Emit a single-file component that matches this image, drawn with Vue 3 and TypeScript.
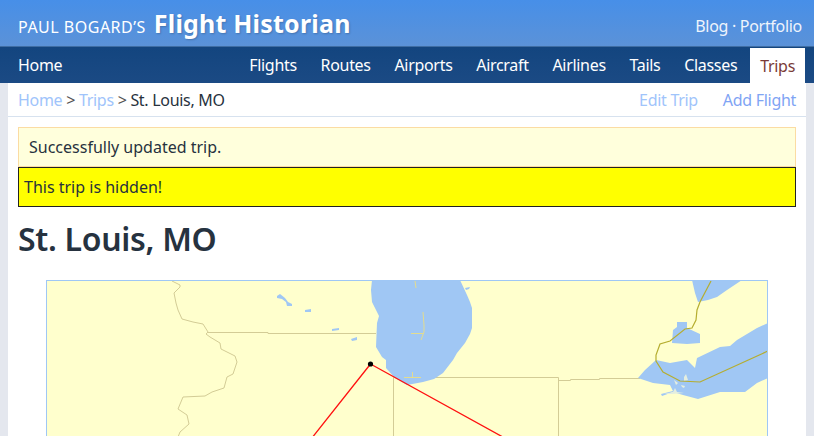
<script setup lang="ts">
const navItems: string[] = ['Flights', 'Routes', 'Airports', 'Aircraft', 'Airlines', 'Tails', 'Classes']
</script>

<template>
  <div class="page">
    <header class="banner">
      <div class="brand"><span class="owner">PAUL BOGARD’S</span><span class="title">Flight Historian</span></div>
      <div class="ext">Blog · Portfolio</div>
    </header>
    <nav class="nav">
      <a class="home">Home</a>
      <div class="links">
        <a v-for="n in navItems" :key="n" class="item">{{ n }}</a>
        <a class="item active">Trips</a>
      </div>
    </nav>
    <main class="main">
      <div class="crumbs">
        <div><a class="pale">Home</a> <span class="sep">&gt;</span> <a class="pale">Trips</a> <span class="sep">&gt;</span> St. Louis, MO</div>
        <div class="actions"><a class="pale">Edit Trip</a><a class="strong">Add Flight</a></div>
      </div>
      <div class="content">
        <div class="flash">Successfully updated trip.</div>
        <div class="hidden">This trip is hidden!</div>
        <h1>St. Louis, MO</h1>
        <div class="map">
          <svg width="722" height="200" viewBox="46 280 722 200">
            <rect x="46" y="280" width="722" height="200" fill="#ffffcd" />
            <g fill="none" stroke="#d3cc96" stroke-width="1">
              <path d="M172 281L180 285L180 287L174 293L176 303L178 310L182 319L193 322L203 324L208 332L206 334L210 337L220 343L221 349L235 356L237 362L233 374L227 377L224 388L212 392L205 396L183 397L178 409L187 415L189 424L180 432L178 437" />
              <path d="M208 332.5H268V333.5H376" />
              <path d="M393.5 437V377.5H558.5V437M558.5 380.5H570.5V379.5H599.5V378.5H640" />
            </g>
            <g fill="#a0c7f4">
              <path d="M372 280L371 290L372 302L375 308L379 316L377 323L376 347L382 357L386 360L386 368L395 378L407 385L423 382L434 379L443 373L453 360L457 353L465 343L470 334L472 328L472 308L470 302L467 295L460 280Z" />
              <path d="M692 280L695 293L698 302L708 300L717 297L727 290L742 280Z" />
              <path d="M677 322L687 322L687 328L700 334L700 343L687 344L672 343L673 330L677 327Z" />
              <path d="M638 378L645 370L656 360L670 363L687 360L695 368L697 358L720 347L730 346L737 340L757 328L768 323L768 378L757 383L745 392L720 392L698 399L683 395L673 392L662 396L661 394L673 391L670 385L653 383Z" />
              <path d="M305 310L311 309L311 312L305 312ZM332 329L339 328L339 330L332 331ZM351 339L357 337L357 340L352 341ZM277 296L280 294L285 298L288 302L292 304L292 306L287 306L286 302L282 299L277 298ZM465 288L470 287L469 289L466 290Z" />
            </g>
            <path d="M684 377L686 374L688 380L684 381ZM674 380L678 383L676 385ZM681 385L685 386L684 388L682 387ZM664 394L673 392L675 388L677 392L684 393L672 394Z" fill="#e4eee0" />
            <g fill="none" stroke="#e3dc8f" stroke-width="1">
              <path d="M415 281L416 288M423 312L424 325L424 332L421 340M411 333.5H423M404 377.5H421M412.5 372V377" />
            </g>
            <path d="M711 281L700 302L697 310L696 320L692 328L685 329L670 341L660 344L656 355L656 361L663 372L680 381L700 382L768 351" fill="none" stroke="#b5ad2f" stroke-width="1.2" />
            <g fill="none" stroke="#ff1010" stroke-width="1.3">
              <path d="M370.5 364L300 453M370.5 364L530 452" />
            </g>
            <circle cx="370.5" cy="364" r="2.6" fill="#000" />
          </svg>
        </div>
      </div>
    </main>
  </div>
</template>

<style scoped>
.page {
  height: 436px;
  overflow: hidden;
  background: #e4e7ee;
  color: #27323e;
  font-family: "Noto Sans", "Lato", sans-serif;
  font-size: 16px;
  letter-spacing: -0.3px;
}
.banner {
  height: 46px;
  box-sizing: border-box;
  display: flex;
  align-items: center;
  justify-content: space-between;
  padding: 0 12px 0 18px;
  background: linear-gradient(#478fe8, #5b92d8);
  color: #fff;
}
.brand { display: flex; align-items: baseline; gap: 8px; }
.owner { font-size: 16px; letter-spacing: 0.5px; }
.title {
  font-size: 25px;
  font-weight: 700;
  letter-spacing: 0.2px;
  text-shadow: 1px 1px 2px rgba(0, 0, 0, 0.2);
}
.ext { color: #eef4fc; padding-top: 6px; }
.nav {
  height: 37px;
  box-sizing: border-box;
  border-top: 1px solid #3f6da3;
  display: flex;
  align-items: stretch;
  justify-content: space-between;
  padding: 0 9px 0 18px;
  background: linear-gradient(#13457f, #1b4a84);
  color: #fff;
}
.home { align-self: center; }
.links { display: flex; align-items: stretch; }
.item { display: flex; align-items: center; padding: 0 11.85px; }
.active {
  margin: 1px 0 0 1px;
  padding: 0 10px;
  background: #fff;
  color: #7a3b38;
}
.main {
  margin: 0 8px;
  background: #fff;
  height: 353px;
  overflow: hidden;
}
.crumbs {
  height: 34px;
  box-sizing: border-box;
  border-bottom: 1px solid #d7e2ef;
  display: flex;
  align-items: center;
  justify-content: space-between;
  padding: 0 10px;
}
.pale { color: #a0c4fb; }
.strong { color: #7fa4f4; }
.sep { color: #555; }
.actions { display: flex; gap: 25px; }
.content { padding: 10px 10px 0; }
.flash {
  height: 40px;
  box-sizing: border-box;
  border: 1px solid #fbdca3;
  background: #ffffdc;
  padding: 0 10px;
  display: flex;
  align-items: center;
  letter-spacing: 0;
}
.hidden {
  height: 40px;
  box-sizing: border-box;
  border: 1px solid #222;
  background: #ff0;
  padding: 0 5px;
  display: flex;
  align-items: center;
  letter-spacing: 0;
}
h1 {
  margin: 12px 0 0;
  font-size: 32px;
  line-height: 40px;
  font-weight: 600;
  color: #26323f;
  letter-spacing: -0.3px;
}
.map {
  margin: 21px 28px 0;
  border: 1px solid #9fc7f5;
  width: 720px;
  box-sizing: content-box;
  overflow: hidden;
  height: 200px;
}
.map svg { display: block; margin: -1px; }
</style>
